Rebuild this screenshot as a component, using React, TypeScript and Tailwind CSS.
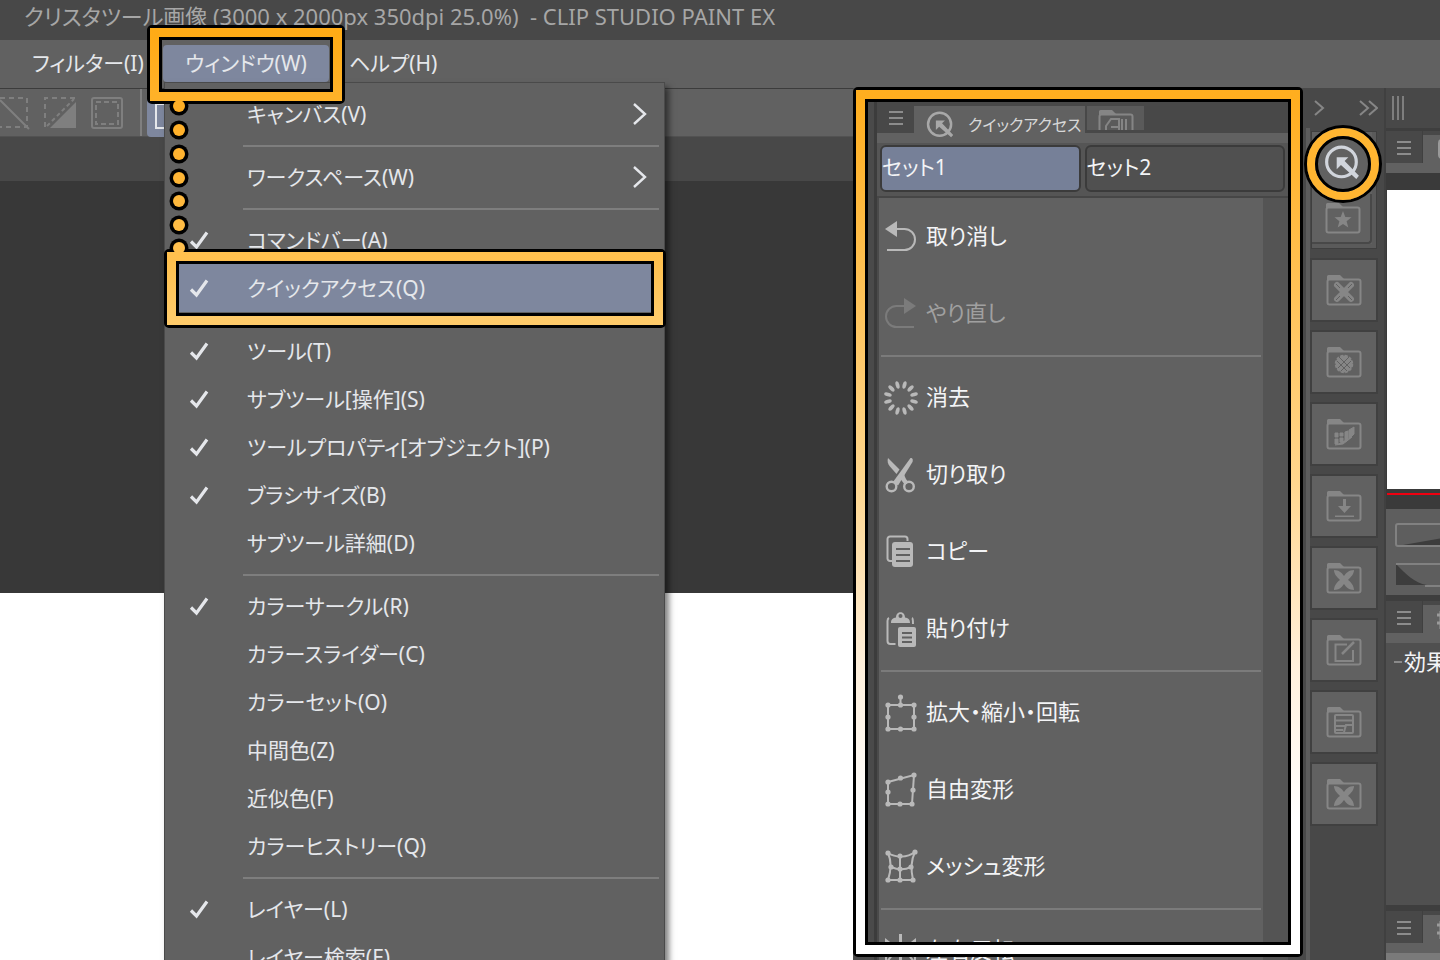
import type { ReactNode } from 'react';

type MenuEntry = { label: string; checked?: boolean; submenu?: boolean; active?: boolean } | null;

// null draws a separator
const windowMenu: MenuEntry[] = [
  { label: 'キャンバス(V)', submenu: true },
  null,
  { label: 'ワークスペース(W)', submenu: true },
  null,
  { label: 'コマンドバー(A)', checked: true },
  { label: 'クイックアクセス(Q)', checked: true, active: true },
  null,
  { label: 'ツール(T)', checked: true },
  { label: 'サブツール[操作](S)', checked: true },
  { label: 'ツールプロパティ[オブジェクト](P)', checked: true },
  { label: 'ブラシサイズ(B)', checked: true },
  { label: 'サブツール詳細(D)' },
  null,
  { label: 'カラーサークル(R)', checked: true },
  { label: 'カラースライダー(C)' },
  { label: 'カラーセット(O)' },
  { label: '中間色(Z)' },
  { label: '近似色(F)' },
  { label: 'カラーヒストリー(Q)' },
  null,
  { label: 'レイヤー(L)', checked: true },
  { label: 'レイヤー検索(E)' },
];

function Svg({ w, h, children, className = '' }: { w: number; h: number; children: ReactNode; className?: string }) {
  return (
    <svg
      width={w}
      height={h}
      viewBox={`0 0 ${w} ${h}`}
      fill="none"
      stroke="currentColor"
      aria-hidden="true"
      className={`shrink-0 ${className}`}
    >
      {children}
    </svg>
  );
}

function Dots({ points }: { points: number[][] }) {
  return (
    <g fill="currentColor" stroke="none">
      {points.map(([x, y]) => (
        <circle key={`${x}-${y}`} cx={x} cy={y} r="2.6" />
      ))}
    </g>
  );
}

const UndoIcon = () => (
  <Svg w={32} h={34}>
    <path d="M10 9h9.500a10.500 10.500 0 0 1 0 21H2" strokeWidth="2" />
    <path d="M0 9 12 1v16z" fill="currentColor" stroke="none" />
  </Svg>
);

const RedoIcon = () => (
  <Svg w={32} h={34}>
    <path d="M20 9h-8.500a10.500 10.500 0 0 0 0 21H29" strokeWidth="2" />
    <path d="M31 9 19 1v16z" fill="currentColor" stroke="none" />
  </Svg>
);

const ClearIcon = () => (
  <Svg w={36} h={36} className="-ml-0.5">
    {Array.from({ length: 12 }, (_, i) => (
      <ellipse
        key={i}
        cx="18"
        cy="4.500"
        rx="1.900"
        ry="3.900"
        fill="currentColor"
        stroke="none"
        transform={`rotate(${i * 30 + 15} 18 18)`}
      />
    ))}
  </Svg>
);

const CutIcon = () => (
  <Svg w={32} h={36}>
    <circle cx="6.500" cy="29.500" r="4.800" strokeWidth="2.400" />
    <circle cx="24" cy="29.500" r="4.800" strokeWidth="2.400" />
    <path d="M25.500 1c2.500 0 2.500 2 2 4L13 28.500 8 25z" fill="currentColor" stroke="none" />
    <path d="M3 1c-1 3 0 6 1.500 8l7 8 3-4.500z" fill="currentColor" stroke="none" />
    <path d="m15.500 22 3.500-5c1 4 3 7 5 8l-4 3z" fill="currentColor" stroke="none" />
  </Svg>
);

const CopyIcon = () => (
  <Svg w={32} h={34}>
    <path d="M7 26H5a2.500 2.500 0 0 1-2.500-2.500V4A2.500 2.500 0 0 1 5 1.500h15A2.500 2.500 0 0 1 22.500 4v2" strokeWidth="2" />
    <rect x="7" y="7" width="21" height="25" rx="3" fill="currentColor" stroke="none" />
    <path d="M11 14h14M11 20h14M11 26h14" stroke="#616161" strokeWidth="2" />
  </Svg>
);

const PasteIcon = () => (
  <Svg w={32} h={38}>
    <path d="M4 8c-1 .5-1.500 1-1.500 3v20c0 2 1 3 3 3h5M27 8c1 .5 1 1.500 1 6" strokeWidth="2" />
    <path d="M6 13c0-4 2-5 5-5.500C11 .5 20 .5 20 7.500c3 .5 5 1.500 5 5.500z" fill="currentColor" stroke="none" />
    <circle cx="15.500" cy="6" r="2" fill="#616161" stroke="none" />
    <rect x="13" y="17" width="18" height="20" rx="2" fill="currentColor" stroke="none" />
    <path d="M17 23h10M17 27.500h10M17 32h10" stroke="#616161" strokeWidth="2" />
  </Svg>
);

const ScaleIcon = () => (
  <Svg w={32} h={38}>
    <path d="M3 11h26v24H3zM15.500 3v8" strokeWidth="2" />
    <Dots points={[[3, 11], [15.5, 11], [29, 11], [3, 23], [29, 23], [3, 35], [15.5, 35], [29, 35], [15.5, 3]]} />
  </Svg>
);

const FreeIcon = () => (
  <Svg w={32} h={36}>
    <path d="M3 10 29 3l-2 29H3z" strokeWidth="2" />
    <Dots points={[[3, 10], [15.5, 6], [29, 3], [3, 20], [28, 18], [3, 32], [15, 32], [27, 32]]} />
  </Svg>
);

const MeshIcon = () => (
  <Svg w={34} h={36}>
    <path d="M3 4c8 5 19 5 27-1-5 10-4 19-2 28H3C6 22 7 13 3 4zM15 7v24M6 18c7 3 14 3 20 0" strokeWidth="2" />
    <Dots points={[[3, 4], [15, 7], [30, 3], [6, 18], [15, 20], [26, 18], [3, 31], [15, 31], [28, 31]]} />
  </Svg>
);

const FlipIcon = () => (
  <Svg w={32} h={34}>
    <path d="M15.500 0v34" strokeWidth="3" />
    <path d="M1 6l11 9-11 14zM30 6l-11 9 11 14z" strokeWidth="2" />
  </Svg>
);

const QuickIcon = ({ size }: { size: number }) => (
  <svg
    width={size}
    height={size}
    viewBox="0 0 34 34"
    fill="none"
    stroke="currentColor"
    aria-hidden="true"
    className="shrink-0"
  >
    <circle cx="16.500" cy="16" r="14" strokeWidth="3" />
    <path d="M12 11.500h11l-3.500 3.500L33 29l-2.500 3L16 19l-4 4z" fill="currentColor" stroke="none" />
  </svg>
);

const quickItems: ({ label: string; icon: ReactNode; disabled?: boolean } | null)[] = [
  { label: '取り消し', icon: <UndoIcon /> },
  { label: 'やり直し', icon: <RedoIcon />, disabled: true },
  null,
  { label: '消去', icon: <ClearIcon /> },
  { label: '切り取り', icon: <CutIcon /> },
  { label: 'コピー', icon: <CopyIcon /> },
  { label: '貼り付け', icon: <PasteIcon /> },
  null,
  { label: '拡大・縮小・回転', icon: <ScaleIcon /> },
  { label: '自由変形', icon: <FreeIcon /> },
  { label: 'メッシュ変形', icon: <MeshIcon /> },
  null,
  { label: '左右反転', icon: <FlipIcon /> },
];

function Folder({ children }: { children?: ReactNode }) {
  return (
    <Svg w={36} h={32}>
      <path d="M1 6V2.500A1.500 1.500 0 0 1 2.500 1H14l4 4h-4v1z" fill="currentColor" stroke="none" />
      <rect x="1.500" y="5.500" width="33" height="25" rx="2" strokeWidth="2" />
      {children}
    </Svg>
  );
}

const starGlyph = (
  <path d="m18 9 2.300 6 6.200.3-4.900 4 1.700 6.200-5.300-3.500-5.300 3.500 1.700-6.200-4.900-4 6.200-.3z" fill="currentColor" stroke="none" />
);
const crossGlyph = (
  <path
    d="M8 8c5 0 8 3 10 6 2-3 5-6 10-6 0 4-3 7-6 10 3 2 6 6 6 10-5 0-8-3-10-6-2 3-5 6-10 6 0-4 3-8 6-10-3-3-6-6-6-10z"
    fill="currentColor"
    stroke="none"
  />
);

const materialFolders: { label: string; glyph: ReactNode }[] = [
  {
    label: 'カラーパターン',
    glyph: (
      <g>
        <path d="m11 11 14 14M25 11 11 25" strokeWidth="6" strokeLinecap="round" />
        <path d="m10 10 4 4M26 10l-4 4M10 26l4-4M26 26l-4-4" stroke="#616161" strokeWidth="1" />
      </g>
    ),
  },
  {
    label: '単色パターン',
    glyph: (
      <g>
        <circle cx="18" cy="18" r="8.500" fill="currentColor" strokeWidth="1.500" strokeDasharray="3 1.500" />
        <path d="m13 11 11 11M11 15l10 10M23 11 12 22M25 15 15 25" stroke="#616161" strokeWidth="1" />
      </g>
    ),
  },
  {
    label: '漫画素材',
    glyph: (
      <g fill="currentColor" strokeWidth="1">
        <path d="M9 15h3v4H9zM9 21h3v5H9zM14 15h3v3h-3zM14 20h3v4h-3zM19 14l3-1v9l-3 2z" />
        <path d="m23 12 5-3v7l-5 5zM9 27l8-1 9-7" />
      </g>
    ),
  },
  {
    label: 'ダウンロード',
    glyph: <path d="M17 9h3v7h5l-6.500 7L12 16h5zM9 25.500h19v1.500H9z" fill="currentColor" stroke="none" />,
  },
  { label: '画像素材', glyph: crossGlyph },
  {
    label: '編集',
    glyph: (
      <g strokeWidth="2">
        <path d="M21 10.500H9.500V27H27V16" />
        <path d="m16 20 12-12" strokeWidth="2.500" />
      </g>
    ),
  },
  {
    label: 'コマ割り',
    glyph: (
      <g strokeWidth="2">
        <rect x="9" y="9" width="18" height="18" rx="1" />
        <path d="M9 14.500h18M9 20h10M18 26l2-7h7M9 24h8" />
      </g>
    ),
  },
  { label: '3D', glyph: crossGlyph },
];

// Highlight outline: black / coloured band / black
function Frame({ className, band }: { className: string; band: string }) {
  return (
    <div className={`pointer-events-none absolute z-20 flex rounded-[5px] border-[3px] border-black ${className}`}>
      <div className={`flex flex-1 border-[9px] ${band}`}>
        <div className="flex-1 border-[3px] border-black" />
      </div>
    </div>
  );
}

const trail = [
  { y: 12, color: '#ffaf25' },
  { y: 36, color: '#ffb12a' },
  { y: 60, color: '#ffb330' },
  { y: 84, color: '#ffb636' },
  { y: 107, color: '#ffb93d' },
  { y: 131, color: '#ffbc44' },
  { y: 154, color: '#ffc04e' },
];

function DotTrail() {
  return (
    <>
      <Svg w={20} h={166} className="absolute left-1.5 top-[49px] z-10">
        {trail.map(d => (
          <circle key={d.y} cx="10" cy={d.y} r="9.500" fill="#000" stroke="none" />
        ))}
      </Svg>
      <Svg w={20} h={166} className="absolute left-1.5 top-[49px] z-30">
        {trail.map(d => (
          <circle key={d.y} cx="10" cy={d.y} r="6" fill={d.color} stroke="none" />
        ))}
      </Svg>
    </>
  );
}

function WindowMenu() {
  return (
    <div
      role="menu"
      className="absolute left-px top-full w-[501px] border border-[#4a4a4a] bg-[#616161] pt-[7px] shadow-[4px_5px_6px_rgba(0,0,0,0.5)]"
    >
      {windowMenu.map((entry, i) =>
        entry ? (
          <div key={entry.label} className="relative">
            <button
              role="menuitem"
              className={`flex h-12 w-full items-center pr-4 text-left ${entry.active ? 'bg-[#7e879e]' : ''}`}
            >
              <span className="w-[82px] shrink-0 pl-6">
                {entry.checked && (
                  <Svg w={20} h={20}>
                    <path d="M2 11.500 7.500 17 18 2.500" strokeWidth="3.200" />
                  </Svg>
                )}
              </span>
              <span className="flex-1 pt-0.5">{entry.label}</span>
              {entry.submenu && (
                <Svg w={16} h={24}>
                  <path d="m2 2 11 10L2 22" strokeWidth="2.400" />
                </Svg>
              )}
            </button>
            {entry.active && (
              <Frame
                className="-bottom-4 -left-px -right-0.5 -top-[15px]"
                band="[border-image:linear-gradient(#ffc04e,#ffcb6a)_1]"
              />
            )}
          </div>
        ) : (
          <div key={i} role="separator" className="ml-[78px] mr-[5px] flex h-[15px] items-center">
            <div className="h-0.5 w-full bg-[#7e7e7e]" />
          </div>
        ),
      )}
    </div>
  );
}

function Toolbar() {
  return (
    <div className="flex h-[49px] shrink-0 items-center border-b border-t border-b-[#525252] border-t-[#3c3c3c] bg-[#616161] text-[#7f7f7f]">
      <Svg w={30} h={34}>
        <path d="M0 2h27v29H0" strokeWidth="2" strokeDasharray="5 4" />
        <path d="m0 4 29 29" strokeWidth="2" />
      </Svg>
      <Svg w={34} h={34} className="ml-3.5">
        <path d="M31 2H1v29" strokeWidth="2" strokeDasharray="5 4" />
        <path d="M3 30 30 3" strokeWidth="2" strokeDasharray="4 3" />
        <path d="M32 6v26H6z" fill="currentColor" stroke="none" />
      </Svg>
      <Svg w={34} h={34} className="ml-3">
        <rect x="2" y="2" width="30" height="30" rx="2" strokeWidth="2" />
        <rect x="6" y="6" width="22" height="22" strokeWidth="2" strokeDasharray="5 3" />
      </Svg>
      <div className="ml-4 h-full w-0.5 bg-[#7f7f7f]" />
      <div className="ml-[5px] mt-2 flex h-10 w-10 items-center justify-center rounded bg-[#7e879e] text-gray-200">
        <Svg w={26} h={28}>
          <rect x="2" y="1" width="22" height="24" strokeWidth="2" />
        </Svg>
      </div>
    </div>
  );
}

function Hamburger({ className = '' }: { className?: string }) {
  return (
    <button aria-label="パレットメニュー" className={`flex shrink-0 justify-center text-[#8c8c8c] ${className}`}>
      <Svg w={14} h={16}>
        <path d="M0 2h14M0 8h14M0 14h14" strokeWidth="2" />
      </Svg>
    </button>
  );
}

function QuickAccessPanel() {
  return (
    <section className="relative flex w-[450px] shrink-0 bg-[#4a4a4a] pl-[21px] pr-[15px] pt-[13px]">
      <div className="flex min-w-0 flex-1 flex-col border-l-[3px] border-[#3c3c3c]">
        <div className="flex h-8 shrink-0 bg-[#484848]">
          <Hamburger className="w-[37px] pt-[9px]" />
          <button className="z-10 -mb-2.5 mt-[5px] flex w-[171px] items-center gap-3.5 whitespace-nowrap bg-[#616161] pl-3 text-[16px] text-[#d8d8d8]">
            <span className="text-[#a8a8a8]">
              <QuickIcon size={28} />
            </span>
            クイックアクセス
          </button>
          <button
            aria-label="素材"
            className="ml-0.5 mt-[5px] flex h-[26px] w-[57px] items-start justify-center overflow-hidden border-b-2 border-[#484848] bg-[#5a5a5a] pt-[3px] text-[#858585]"
          >
            <Folder>
              <path d="M8 26V17l5-7h8v16M13 18h7M24 10v16M28 10v16" strokeWidth="2" />
            </Folder>
          </button>
        </div>
        <div className="h-2.5 shrink-0 bg-[#616161]" />
        <div className="flex h-[55px] shrink-0 gap-1 border-b-2 border-[#464646] bg-[#555555] px-[3px] pt-[2px] text-[21px] text-gray-100">
          <button className="h-[47px] flex-1 rounded-md border-2 border-[#3b3b3b] bg-[#768098] pb-0.5 text-left">セット1</button>
          <button className="h-[47px] flex-1 rounded-md border-2 border-[#3b3b3b] bg-[#505050] pb-0.5 text-left">セット2</button>
        </div>
        <div className="flex min-h-0 flex-1">
          <div className="ml-0.5 flex-1 overflow-hidden bg-[#616161]">
            {quickItems.map((item, i) =>
              item ? (
                <button
                  key={item.label}
                  disabled={item.disabled}
                  className={`flex h-[77px] w-full items-center pl-1.5 ${item.disabled ? 'text-[#7b7b7b]' : 'text-[#b9b9b9]'}`}
                >
                  <span className="w-[41px] shrink-0">{item.icon}</span>
                  <span className={`pb-0.5 text-[22px] ${item.disabled ? 'text-[#a0a0a0]' : 'text-gray-100'}`}>
                    {item.label}
                  </span>
                </button>
              ) : (
                <div key={i} role="separator" className="mx-0.5 flex h-[7px] items-center">
                  <div className="h-0.5 w-full bg-[#7b7b7b]" />
                </div>
              ),
            )}
          </div>
          <div className="w-[25px] bg-[#545454]" />
        </div>
      </div>
      <Frame
        className="-top-px bottom-[3px] left-0 right-0"
        band="[border-image:linear-gradient(#ffae1f,#ffc050_20%,#ffd68d_45%,#fff0dc_67%,#ffffff_85%)_1]"
      />
    </section>
  );
}

function MaterialDock() {
  return (
    <aside className="flex w-[81px] shrink-0 flex-col bg-[#484848] pl-[3px] text-[#868686]">
      <div className="flex h-10 shrink-0 items-center justify-between pl-2 pr-1.5">
        <Svg w={11} h={18}>
          <path d="m1 2 8 7-8 7" strokeWidth="2" />
        </Svg>
        <Svg w={20} h={18}>
          <path d="m2 2 8 7-8 7M11 2l8 7-8 7" strokeWidth="2" />
        </Svg>
      </div>
      <div className="flex flex-1 flex-col border-l-4 border-[#5c5c5c] pl-0.5">
        <div className="mb-3 mt-1 flex h-[116px] w-16 shrink-0 flex-col border-b-4 border-r-4 border-[#5a5a5a] bg-[#616161] outline outline-[#3f3f3f]">
          <div className="relative flex flex-1 items-center justify-center">
            <button aria-label="クイックアクセス" className="text-gray-300">
              <QuickIcon size={36} />
            </button>
            <div className="pointer-events-none absolute -left-2 -top-[7px] z-20 flex size-[78px] rounded-full border-[3px] border-black">
              <div className="flex flex-1 rounded-full border-8 border-[#ffb531]">
                <div className="flex-1 rounded-full border-[3px] border-black" />
              </div>
            </div>
          </div>
          <button
            aria-label="お気に入り"
            className="flex h-[50px] items-center justify-center rounded-br border-b-2 border-r-2 border-[#484848] pl-1"
          >
            <Folder>{starGlyph}</Folder>
          </button>
        </div>
        {materialFolders.map(f => (
          <button
            key={f.label}
            aria-label={f.label}
            className="mb-3 flex h-[60px] w-16 shrink-0 items-center justify-center bg-[#616161] outline-2 outline-[#404040]"
          >
            <Folder>{f.glyph}</Folder>
          </button>
        ))}
      </div>
    </aside>
  );
}

function PaletteTabs({ children }: { children?: ReactNode }) {
  return (
    <div className="shrink-0 border-t-[3px] border-[#3e3e3e]">
      <div className="flex h-8 bg-[#484848]">
        <Hamburger className="w-[37px] border-r border-[#404040] pt-[9px]" />
        <div className="mt-1 flex flex-1 items-center overflow-hidden bg-[#616161] pl-3.5 text-[#9a9a9a]">{children}</div>
      </div>
      <div className="h-2.5 bg-[#616161]" />
    </div>
  );
}

const tabGlyph = (
  <Svg w={20} h={22}>
    <path d="M8 2H5a3 3 0 0 0-3 3v12a3 3 0 0 0 3 3h15" strokeWidth="2" />
  </Svg>
);

function RightPalettes() {
  return (
    <aside className="flex w-14 shrink-0 flex-col overflow-hidden border-l-2 border-[#404040] bg-[#505050]">
      <div className="flex h-10 shrink-0 items-center bg-[#484848] pl-1.5 text-[#7e7e7e]">
        <Svg w={12} h={24}>
          <path d="M1 0v24M6 0v24M11 0v24" strokeWidth="2" />
        </Svg>
      </div>
      <PaletteTabs>{tabGlyph}</PaletteTabs>
      <div className="shrink-0 bg-[#3a3a3a] pb-3.5 pl-px pt-[17px]">
        <div className="h-[299px] bg-white" />
        <div className="mt-1 h-0.5 bg-[#f00010]" />
      </div>
      <div className="h-[89px] shrink-0 border-b-[3px] border-[#3e3e3e] bg-[#5e5e5e] pl-[9px] pt-[14px] text-[#818181]">
        <Svg w={60} h={24}>
          <path d="M8 22 60 13v9z" fill="#3d3d3d" stroke="none" />
          <rect x="1" y="1" width="80" height="22" rx="2" strokeWidth="2" />
        </Svg>
        <Svg w={60} h={24} className="mt-4">
          <path d="M1 1c10 10 18 19 31 21H1z" fill="#3d3d3d" stroke="none" />
          <path d="M1 1h80M30 23h50" strokeWidth="2" />
        </Svg>
      </div>
      <PaletteTabs>
        <Svg w={20} h={20}>
          <path d="M4 2v18M0 6h8M0 14h8" strokeWidth="3" />
        </Svg>
      </PaletteTabs>
      <div className="h-[265px] shrink-0 border-b-[3px] border-[#3e3e3e] pl-2 pt-0.5 text-[22px] text-gray-100">
        <div className="flex items-center whitespace-nowrap">
          <span className="mr-0.5 h-0.5 w-2 shrink-0 bg-[#8a8a8a]" />
          効果
        </div>
      </div>
      <PaletteTabs>
        <Svg w={20} h={20}>
          <path d="M4 2v18M0 6h8M0 14h8" strokeWidth="3" />
        </Svg>
      </PaletteTabs>
      <div className="flex-1 bg-[#7a7a7a]" />
    </aside>
  );
}

export default function App() {
  return (
    <div className="flex h-screen flex-col overflow-hidden bg-[#484848] font-['Noto_Sans','Noto_Sans_CJK_JP',sans-serif] [font-feature-settings:'palt']">
      <header className="relative z-10">
        <div className="flex h-10 items-center whitespace-pre bg-[#484848] pb-2 pl-6 text-[22px] leading-8 text-[#a6a6a6]">
          {'クリスタツール画像 (3000 x 2000px 350dpi 25.0%)  - CLIP STUDIO PAINT EX'}
        </div>
        <nav className="flex h-12 items-start bg-[#616161] pt-[5px] text-[21px] text-gray-200">
          <button className="h-[37px] w-[163px] whitespace-nowrap pl-8 text-left">フィルター(I)</button>
          <div className="relative">
            <button className="h-[37px] w-[166px] rounded bg-[#7e879e]">ウィンドウ(W)</button>
            <WindowMenu />
            <Frame
              className="-bottom-[22px] -left-4 -right-4 -top-5"
              band="[border-image:linear-gradient(#ffab16,#ffb228)_1]"
            />
            <DotTrail />
          </div>
          <button className="h-[37px] px-5">ヘルプ(H)</button>
        </nav>
      </header>
      <main className="flex min-h-0 flex-1">
        <div className="flex min-w-0 flex-1 flex-col">
          <Toolbar />
          <div className="h-11 shrink-0 bg-[#484848]" />
          <div className="h-[412px] shrink-0 bg-[#383838]" />
          <div className="flex-1 bg-white" />
        </div>
        <QuickAccessPanel />
        <MaterialDock />
        <RightPalettes />
      </main>
    </div>
  );
}
